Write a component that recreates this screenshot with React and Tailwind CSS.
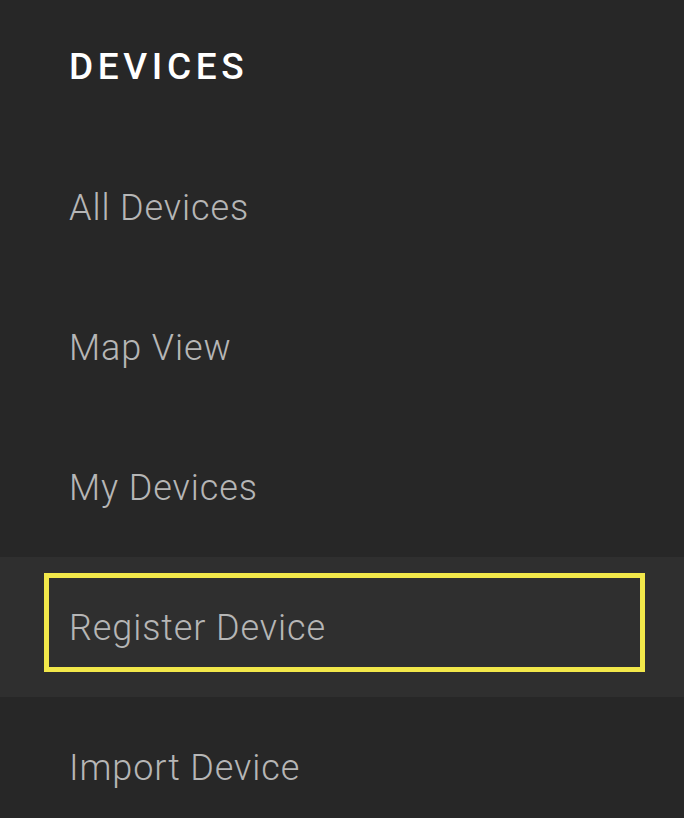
export default function App() {
  const items = ["All Devices", "Map View", "My Devices", "Register Device", "Import Device"];
  return (
    <div className="w-[684px] h-[818px] overflow-hidden bg-[#272727]" style={{ fontFamily: "Roboto, 'Noto Sans', sans-serif" }}>
      <div className="h-[137px] pl-[69px] pt-[44px]">
        <h1 className="text-[37px] leading-[46px] font-medium tracking-[0.125em] text-white">DEVICES</h1>
      </div>
      <ul>
        {items.map((t) => {
          const active = t === "Register Device";
          return (
            <li key={t} className={`h-[140px] flex items-start ${active ? "bg-[#2f2f2f]" : ""}`}>
              <div
                className={
                  active
                    ? "ml-[44px] mt-[16px] w-[601px] h-[99px] flex items-center pt-[10px] pl-[20px] border-[5px] border-[#f2e84a]"
                    : "ml-[44px] mt-[16px] w-[601px] h-[99px] flex items-center pt-[10px] pl-[25px]"
                }
              >
                <span className="text-[36px] font-light text-[#b6b6b6] tracking-[0.025em]">{t}</span>
              </div>
            </li>
          );
        })}
      </ul>
    </div>
  );
}
